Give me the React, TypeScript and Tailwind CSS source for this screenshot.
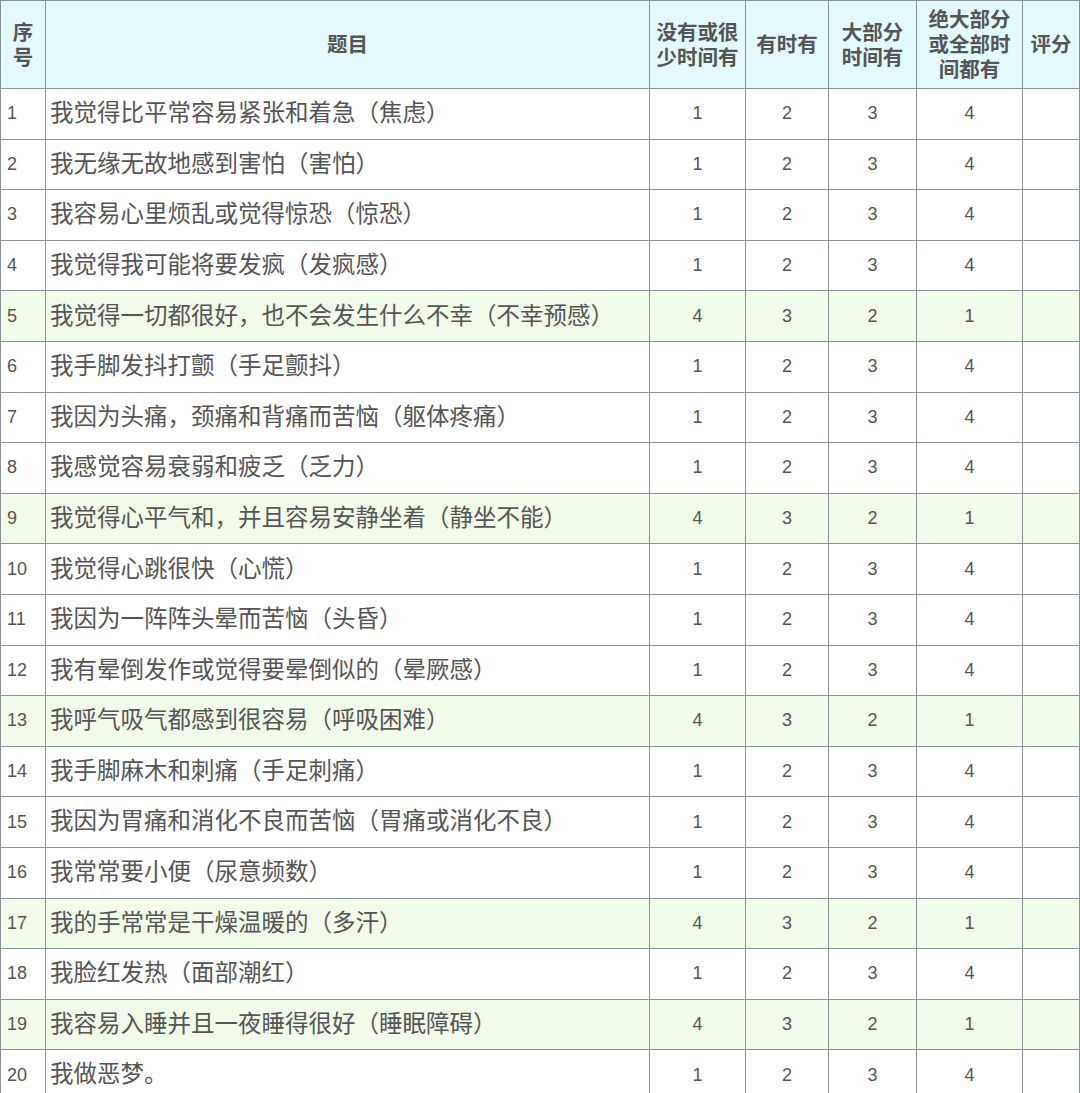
import React from "react";

const rows: [string, boolean][] = [
  ["我觉得比平常容易紧张和着急（焦虑）", false],
  ["我无缘无故地感到害怕（害怕）", false],
  ["我容易心里烦乱或觉得惊恐（惊恐）", false],
  ["我觉得我可能将要发疯（发疯感）", false],
  ["我觉得一切都很好，也不会发生什么不幸（不幸预感）", true],
  ["我手脚发抖打颤（手足颤抖）", false],
  ["我因为头痛，颈痛和背痛而苦恼（躯体疼痛）", false],
  ["我感觉容易衰弱和疲乏（乏力）", false],
  ["我觉得心平气和，并且容易安静坐着（静坐不能）", true],
  ["我觉得心跳很快（心慌）", false],
  ["我因为一阵阵头晕而苦恼（头昏）", false],
  ["我有晕倒发作或觉得要晕倒似的（晕厥感）", false],
  ["我呼气吸气都感到很容易（呼吸困难）", true],
  ["我手脚麻木和刺痛（手足刺痛）", false],
  ["我因为胃痛和消化不良而苦恼（胃痛或消化不良）", false],
  ["我常常要小便（尿意频数）", false],
  ["我的手常常是干燥温暖的（多汗）", true],
  ["我脸红发热（面部潮红）", false],
  ["我容易入睡并且一夜睡得很好（睡眠障碍）", true],
  ["我做恶梦。", false],
];

const th = "border border-[#8a9398] bg-[#e3f9fb] font-bold text-[20.5px] leading-[25px] text-[#555] text-center align-middle";
const td = "border border-[#8a9398] align-middle text-center text-[18px] text-[#555]";

export default function App() {
  return (
    <div className="w-[1080px] h-[1093px] overflow-hidden bg-white" style={{ fontFamily: '"Liberation Sans", "Noto Sans CJK SC", sans-serif' }}>
      <table className="border-collapse table-fixed w-[1079px]">
        <colgroup>
          <col className="w-[45px]" />
          <col className="w-[604px]" />
          <col className="w-[96px]" />
          <col className="w-[83px]" />
          <col className="w-[88px]" />
          <col className="w-[106px]" />
          <col className="w-[57px]" />
        </colgroup>
        <thead>
          <tr className="h-[88px]">
            <th className={th}>序<br />号</th>
            <th className={th}>题目</th>
            <th className={th}>没有或很<br />少时间有</th>
            <th className={th}>有时有</th>
            <th className={th}>大部分<br />时间有</th>
            <th className={th}>绝大部分<br />或全部时<br />间都有</th>
            <th className={th}>评分</th>
          </tr>
        </thead>
        <tbody>
          {rows.map(([q, rev], i) => {
            const vals = rev ? [4, 3, 2, 1] : [1, 2, 3, 4];
            return (
              <tr key={i} className={`h-[50.6px] ${rev ? "bg-[#f1fbea]" : ""}`}>
                <td className={`${td} text-left pl-[6px] text-[18px]`}>{i + 1}</td>
                <td className={`${td} text-left pl-[4px] text-[23.5px]`}>{q}</td>
                {vals.map((v, j) => (
                  <td key={j} className={td}>{v}</td>
                ))}
                <td className={td}></td>
              </tr>
            );
          })}
        </tbody>
      </table>
    </div>
  );
}
